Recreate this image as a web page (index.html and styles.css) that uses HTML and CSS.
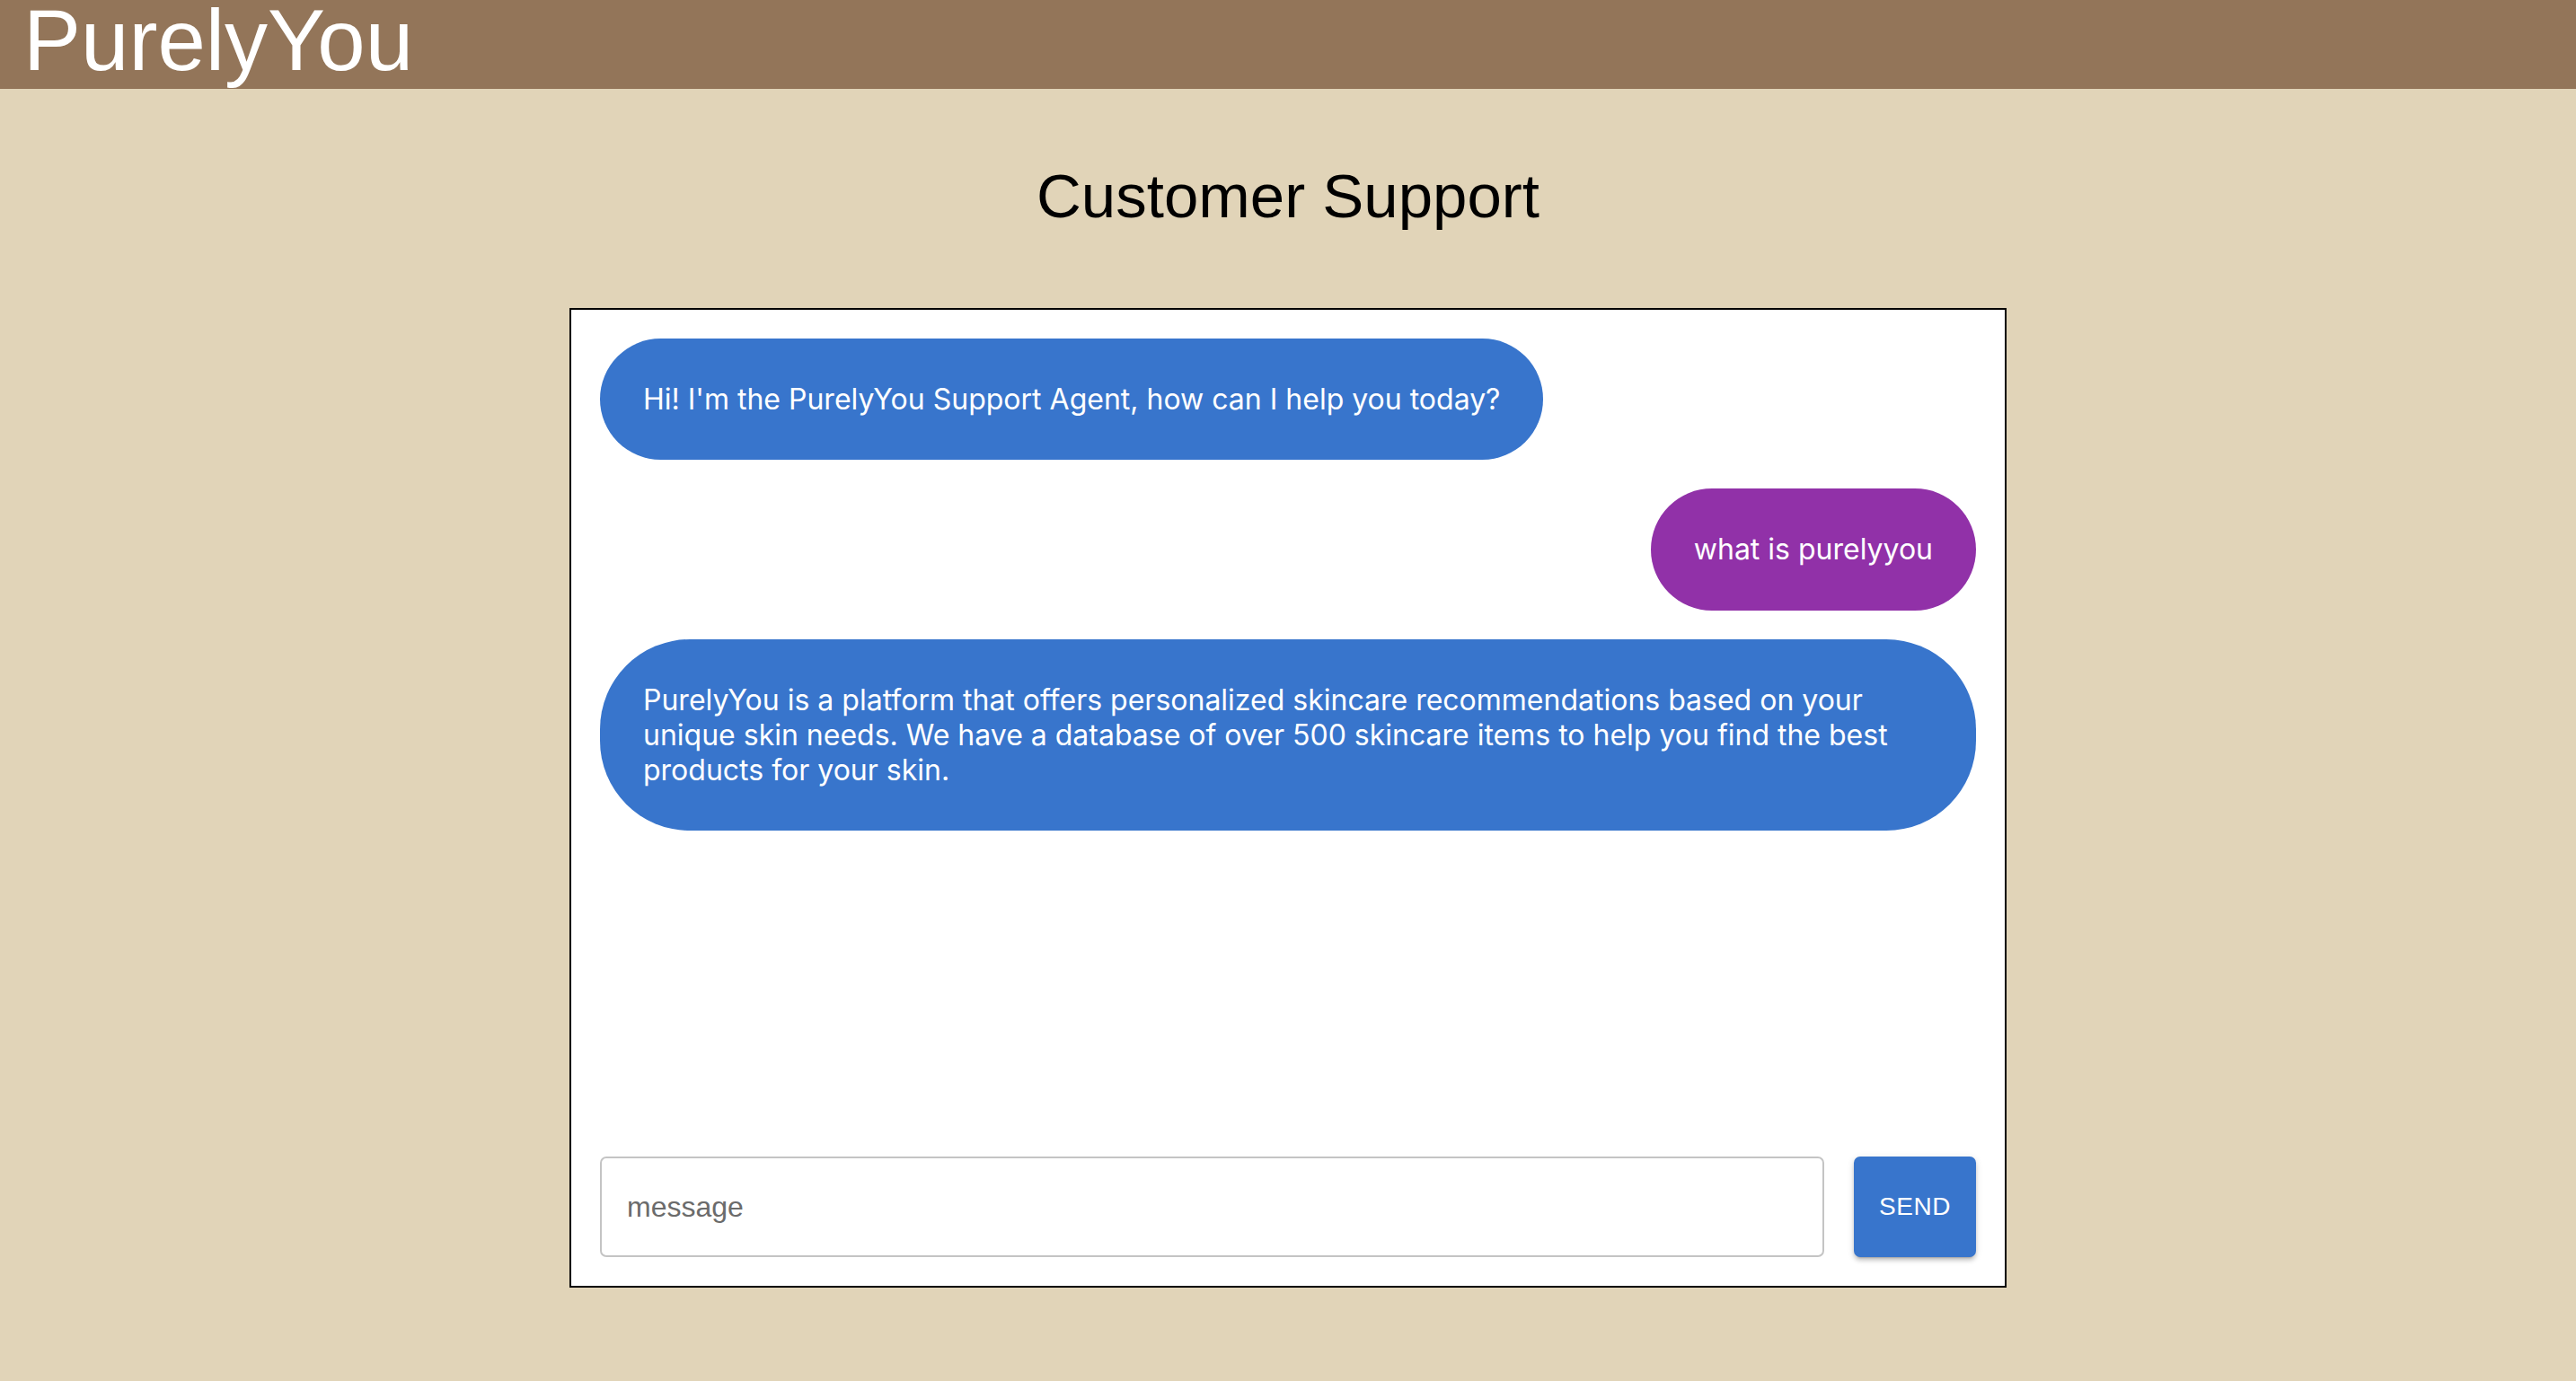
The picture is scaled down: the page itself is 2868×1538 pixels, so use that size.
FILE: index.html
```html
<!DOCTYPE html>
<html lang="en">
<head>
<meta charset="utf-8">
<title>PurelyYou - Customer Support</title>
<link rel="stylesheet" href="styles.css">
</head>
<body>
  <header class="topbar">
    <div class="logo">PurelyYou</div>
  </header>
  <main class="page">
    <h1 class="title">Customer Support</h1>
    <section class="chat">
      <div class="messages">
        <div class="bubble bot">Hi! I'm the PurelyYou Support Agent, how can I help you today?</div>
        <div class="bubble user">what is purelyyou</div>
        <div class="bubble bot">PurelyYou is a platform that offers personalized skincare recommendations based on your unique skin needs. We have a database of over 500 skincare items to help you find the best products for your skin.</div>
      </div>
      <form class="composer" onsubmit="return false">
        <input class="field" type="text" placeholder="message">
        <button class="send" type="submit">Send</button>
      </form>
    </section>
  </main>
</body>
</html>
```

FILE: styles.css
```css
* { box-sizing: border-box; }

html, body {
  margin: 0;
  padding: 0;
}

body {
  background: #e1d4b8;
  font-family: "Liberation Sans", Arial, sans-serif;
  min-height: 1538px;
}

.topbar {
  background: #937559;
  height: 99px;
  padding: 0 0 0 26px;
}

.logo {
  color: #ffffff;
  font-family: "Liberation Sans", Arial, sans-serif;
  font-size: 96px;
  line-height: 89px;
  letter-spacing: 0;
}

.page {
  display: flex;
  flex-direction: column;
  align-items: center;
}

.title {
  margin: 80px 0 85px;
  font-family: "Liberation Sans", Arial, sans-serif;
  font-weight: 400;
  font-size: 69px;
  line-height: 79px;
  color: #000000;
}

.chat {
  width: 1600px;
  height: 1091px;
  background: #ffffff;
  border: 2px solid #000000;
  padding: 32px;
  display: flex;
  flex-direction: column;
}

.messages {
  flex: 1;
  display: flex;
  flex-direction: column;
  align-items: flex-start;
  gap: 32px;
}

.bubble {
  font-family: Inter, "Noto Sans", sans-serif;
  font-size: 32px;
  line-height: 39.3px;
  color: #ffffff;
  padding: 48px;
  border-radius: 100px;
  max-width: 100%;
}

.bot {
  background: #3875cc;
}

.user {
  background: #9131a8;
  align-self: flex-end;
}

.composer {
  display: flex;
  gap: 33px;
  height: 112px;
  margin: 0;
}

.field {
  flex: 1;
  height: 112px;
  border: 2px solid #c4c4c4;
  border-radius: 7px;
  padding: 0 28px;
  font-family: "Liberation Sans", Arial, sans-serif;
  font-size: 32px;
  color: #222;
  outline: none;
  background: #fff;
}

.field::placeholder {
  color: #6b6b6b;
  opacity: 1;
}

.send {
  width: 136px;
  height: 112px;
  border: none;
  border-radius: 7px;
  background: #3875cc;
  color: #ffffff;
  font-family: "Liberation Sans", Arial, sans-serif;
  font-size: 28px;
  letter-spacing: 0.5px;
  text-transform: uppercase;
  box-shadow: 0 5px 2px -4px rgba(0,0,0,0.2), 0 4px 4px 0 rgba(0,0,0,0.14), 0 2px 9px 0 rgba(0,0,0,0.12);
  cursor: pointer;
}
```
